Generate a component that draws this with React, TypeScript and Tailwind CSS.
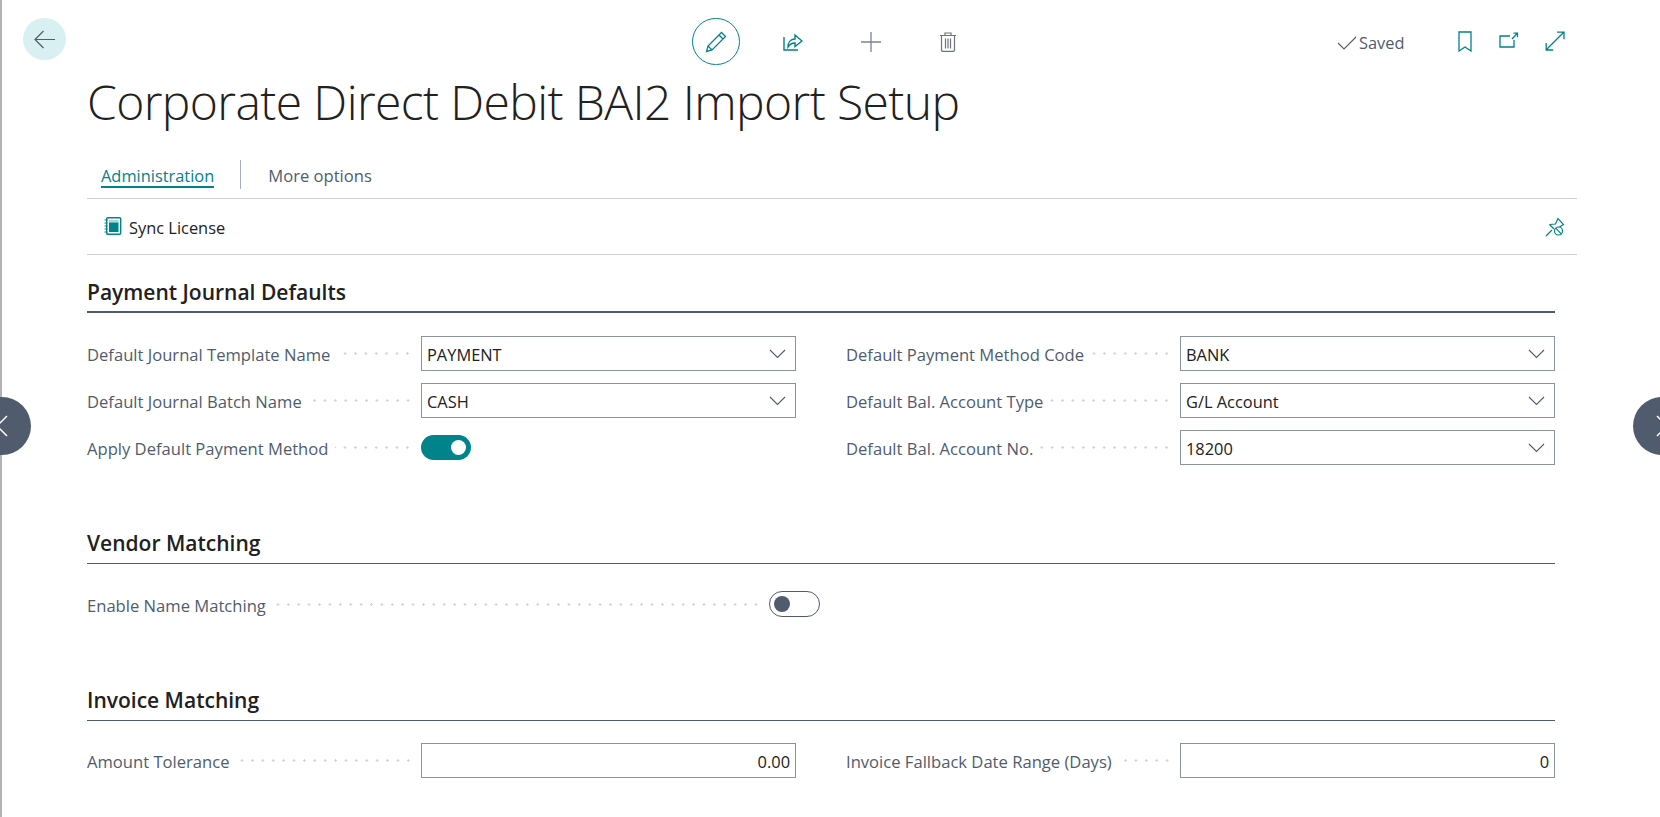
const sans = "font-['Open_Sans','Noto_Sans',sans-serif]";

const Dots = () => (
  <span className="ml-[7px] mr-[8px] h-[3px] flex-1 bg-[radial-gradient(circle,#d4d4d4_1.1px,transparent_1.4px)] bg-[length:10.4px_3px] bg-[position:right_center] bg-repeat-x" />
);

const Label = ({ text, width }: { text: string; width: string }) => (
  <span className={`flex items-center text-[16.6px] text-[#505c6d] ${width}`}>
    <span className="pt-[4px]">{text}</span>
    <Dots />
  </span>
);

const Field = ({ label, value, right }: { label: string; value: string; right?: boolean }) => (
  <div className="flex h-[35px] items-center">
    <Label text={label} width="w-[334px]" />
    <div className={`flex h-full w-[375px] items-center border border-[#8b93a1] pl-[5px] text-[#212121] ${right ? "justify-end pr-[5px]" : "justify-between pr-[9px]"}`}>
      <span className="pt-[3px]">{value}</span>
      {!right && (
        <svg width="17" height="10" viewBox="0 0 17 10" fill="none" stroke="#505c6d" strokeWidth="1.1">
          <path d="M1 1l7.5 7.5L16 1" />
        </svg>
      )}
    </div>
  </div>
);

const ToggleOn = () => (
  <div className="flex h-[25px] w-[50px] items-center justify-end rounded-full bg-[#00838a] pr-[5px]">
    <span className="h-[15px] w-[15px] rounded-full bg-white" />
  </div>
);

const ToggleOff = () => (
  <div className="flex h-[26px] w-[51px] items-center rounded-full border border-[#505c6d] pl-[4px]">
    <span className="h-[16px] w-[16px] rounded-full bg-[#505c6d]" />
  </div>
);

const Section = ({ title, thick, children }: { title: string; thick?: boolean; children: React.ReactNode }) => (
  <section>
    <h2 className={`border-b-[#505c6d] text-[21px] font-semibold leading-[28px] text-[#212121] ${thick ? "border-b-2 pb-[5px]" : "border-b pb-[6px]"}`}>{title}</h2>
    {children}
  </section>
);

export default function App() {
  return (
    <div className={`${sans} relative h-[817px] w-[1660px] overflow-hidden bg-white pl-[2px] text-[16.4px]`}>
      <div className="absolute left-0 top-0 h-full w-[2px] bg-[#b3b3b3]" />

      <button className="absolute left-[23px] top-[18px] flex h-[42px] w-[43px] items-center justify-center rounded-full bg-[#d9f0f2]">
        <svg width="21" height="19" viewBox="0 0 21 19" fill="none" stroke="#505c6d" strokeWidth="1.2">
          <path d="M21 9.5H1M9.5 1 1 9.5 9.5 18" />
        </svg>
      </button>

      {/* prev / next record, half off the page */}
      <div className="absolute left-[-27px] top-[397px] flex h-[58px] w-[58px] items-center justify-center rounded-full bg-[#505c6d]">
        <svg width="12" height="22" viewBox="0 0 12 22" fill="none" stroke="#ffffff" strokeWidth="1.5">
          <path d="M11 1 1 11l10 10" />
        </svg>
      </div>
      <div className="absolute left-[1633px] top-[397px] flex h-[58px] w-[58px] items-center justify-center rounded-full bg-[#505c6d]">
        <svg width="12" height="22" viewBox="0 0 12 22" fill="none" stroke="#ffffff" strokeWidth="1.5">
          <path d="M1 1l10 10L1 21" />
        </svg>
      </div>

      <header className="flex h-[83px] items-start pt-[18px]">
        <div className="ml-[690px] flex h-[47px] items-center">
          <button className="flex h-[47px] w-[48px] items-center justify-center rounded-full border border-[#00838a]">
            <svg width="22" height="22" viewBox="0 0 22 22" fill="none" stroke="#00838a" strokeWidth="1.3">
              <path d="M16.5 1.5 20.5 5.5 7 19 1.5 20.5 3 15 Z" />
              <path d="M14 4 18 8" />
              <path d="M3 15 7 19" />
            </svg>
          </button>
          <svg className="ml-[43px]" width="20" height="18" viewBox="0 0 20 18" fill="none" stroke="#00838a" strokeWidth="1.4">
            <path d="M1 4v13h14" />
            <path d="M5 14c0-5 3-8 7-8V2l7 6-7 5.5V10c-3 0-5 1-7 4Z" />
          </svg>
          <svg className="ml-[58px]" width="20" height="20" viewBox="0 0 20 20" fill="none" stroke="#7a8494" strokeWidth="1.3">
            <path d="M10 0v20M0 10h20" />
          </svg>
          <svg className="ml-[59px]" width="16" height="20" viewBox="0 0 16 20" fill="none" stroke="#6b7482" strokeWidth="1.2">
            <path d="M0 3.5h16M5 3.5V1h6v2.5M1.5 3.5v14.7a1.2 1.2 0 0 0 1.2 1.2h10.6a1.2 1.2 0 0 0 1.2-1.2V3.5" />
            <path d="M5.5 6.5v10M8 6.5v10M10.5 6.5v10" />
          </svg>
        </div>
        <div className="absolute left-[1337px] top-[31px] flex items-center text-[#505c6d]">
          <svg width="20" height="14" viewBox="0 0 20 14" fill="none" stroke="#505c6d" strokeWidth="1.1">
            <path d="M1 7l6 6L19 1" />
          </svg>
          <span className="ml-[2px]">Saved</span>
        </div>
        <svg className="absolute left-[1458px] top-[31px]" width="14" height="21" viewBox="0 0 14 21" fill="none" stroke="#00838a" strokeWidth="1.3">
          <path d="M1 1h12v19l-6-4-6 4Z" />
        </svg>
        <svg className="absolute left-[1499px] top-[32px]" width="20" height="16" viewBox="0 0 20 16" fill="none" stroke="#00838a" strokeWidth="1.3">
          <path d="M11 4H1v11h14V8" />
          <path d="M13 7l5-5.5M14.5 1.2h4v4" />
        </svg>
        <svg className="absolute left-[1545px] top-[31px]" width="20" height="20" viewBox="0 0 20 20" fill="none" stroke="#00838a" strokeWidth="1.3">
          <path d="M1.5 18.5l17-17M12 1.2h7v7M1.2 12v7h7" />
        </svg>
      </header>

      <div className="ml-[85px] w-[1490px]">
        <h1 className="h-[62px] text-[48px] font-light leading-[38px] tracking-[-0.6px] text-[#212121]">Corporate Direct Debit BAI2 Import Setup</h1>

        <nav className="flex h-[54px] items-start border-b border-[#d1d1dc] pl-[14px] pt-[20px]">
          <span className="border-b-2 border-[#00838a] leading-[21px] text-[#00838a]">Administration</span>
          <span className="ml-[26px] mt-[-5px] h-[29px] w-px bg-[#a8aeb8]" />
          <span className="ml-[27px] text-[16.6px] leading-[21px] text-[#505c6d]">More options</span>
        </nav>

        <div className="flex h-[56px] items-center justify-between border-b border-[#d1d1dc] pl-[17px] pr-[12px]">
          <div className="flex items-center text-[#212121]">
            <svg width="18" height="18" viewBox="0 0 18 18">
              <rect x="2.7" y="0.7" width="14" height="16.5" rx="1" fill="none" stroke="#00838a" strokeWidth="1.4" />
              <rect x="5" y="3" width="9.5" height="2.5" fill="#a9d6d8" />
              <rect x="5" y="5.5" width="9.5" height="9.5" fill="#00838a" />
              <path d="M0.5 3h3M0.5 6h3M0.5 9h3M0.5 12h3M0.5 15h3" stroke="#00838a" strokeWidth="1" />
            </svg>
            <span className="ml-[7px] pt-[3px]">Sync License</span>
          </div>
          <svg width="20" height="20" viewBox="0 0 20 20" fill="none" stroke="#00838a" strokeWidth="1.2">
            <path d="M1 19l6-6" />
            <path d="M4.5 7.5 10.5 7 13 1.5l5.5 6-4 2.5" />
            <path d="M4.5 7.5 9 12" />
            <circle cx="13.5" cy="14" r="4" />
            <path d="M10.7 11.2l5.6 5.6" />
          </svg>
        </div>

        <div className="w-[1468px] pt-[23px]">
          <Section title="Payment Journal Defaults" thick>
            <div className="mt-[23px] grid grid-cols-[709px_709px] gap-x-[50px]">
              <div className="flex flex-col gap-[12px]">
                <Field label="Default Journal Template Name" value="PAYMENT" />
                <Field label="Default Journal Batch Name" value="CASH" />
                <div className="flex h-[35px] items-center">
                  <Label text="Apply Default Payment Method" width="w-[334px]" />
                  <ToggleOn />
                </div>
              </div>
              <div className="flex flex-col gap-[12px]">
                <Field label="Default Payment Method Code" value="BANK" />
                <Field label="Default Bal. Account Type" value="G/L Account" />
                <Field label="Default Bal. Account No." value="18200" />
              </div>
            </div>
          </Section>

          <div className="mt-[64px]">
            <Section title="Vendor Matching">
              <div className="mt-[27px] flex h-[26px] items-center">
                <Label text="Enable Name Matching" width="w-[682px]" />
                <ToggleOff />
              </div>
            </Section>
          </div>

          <div className="mt-[69px]">
            <Section title="Invoice Matching">
              <div className="mt-[22px] grid grid-cols-[709px_709px] gap-x-[50px]">
                <Field label="Amount Tolerance" value="0.00" right />
                <Field label="Invoice Fallback Date Range (Days)" value="0" right />
              </div>
            </Section>
          </div>
        </div>
      </div>
    </div>
  );
}
